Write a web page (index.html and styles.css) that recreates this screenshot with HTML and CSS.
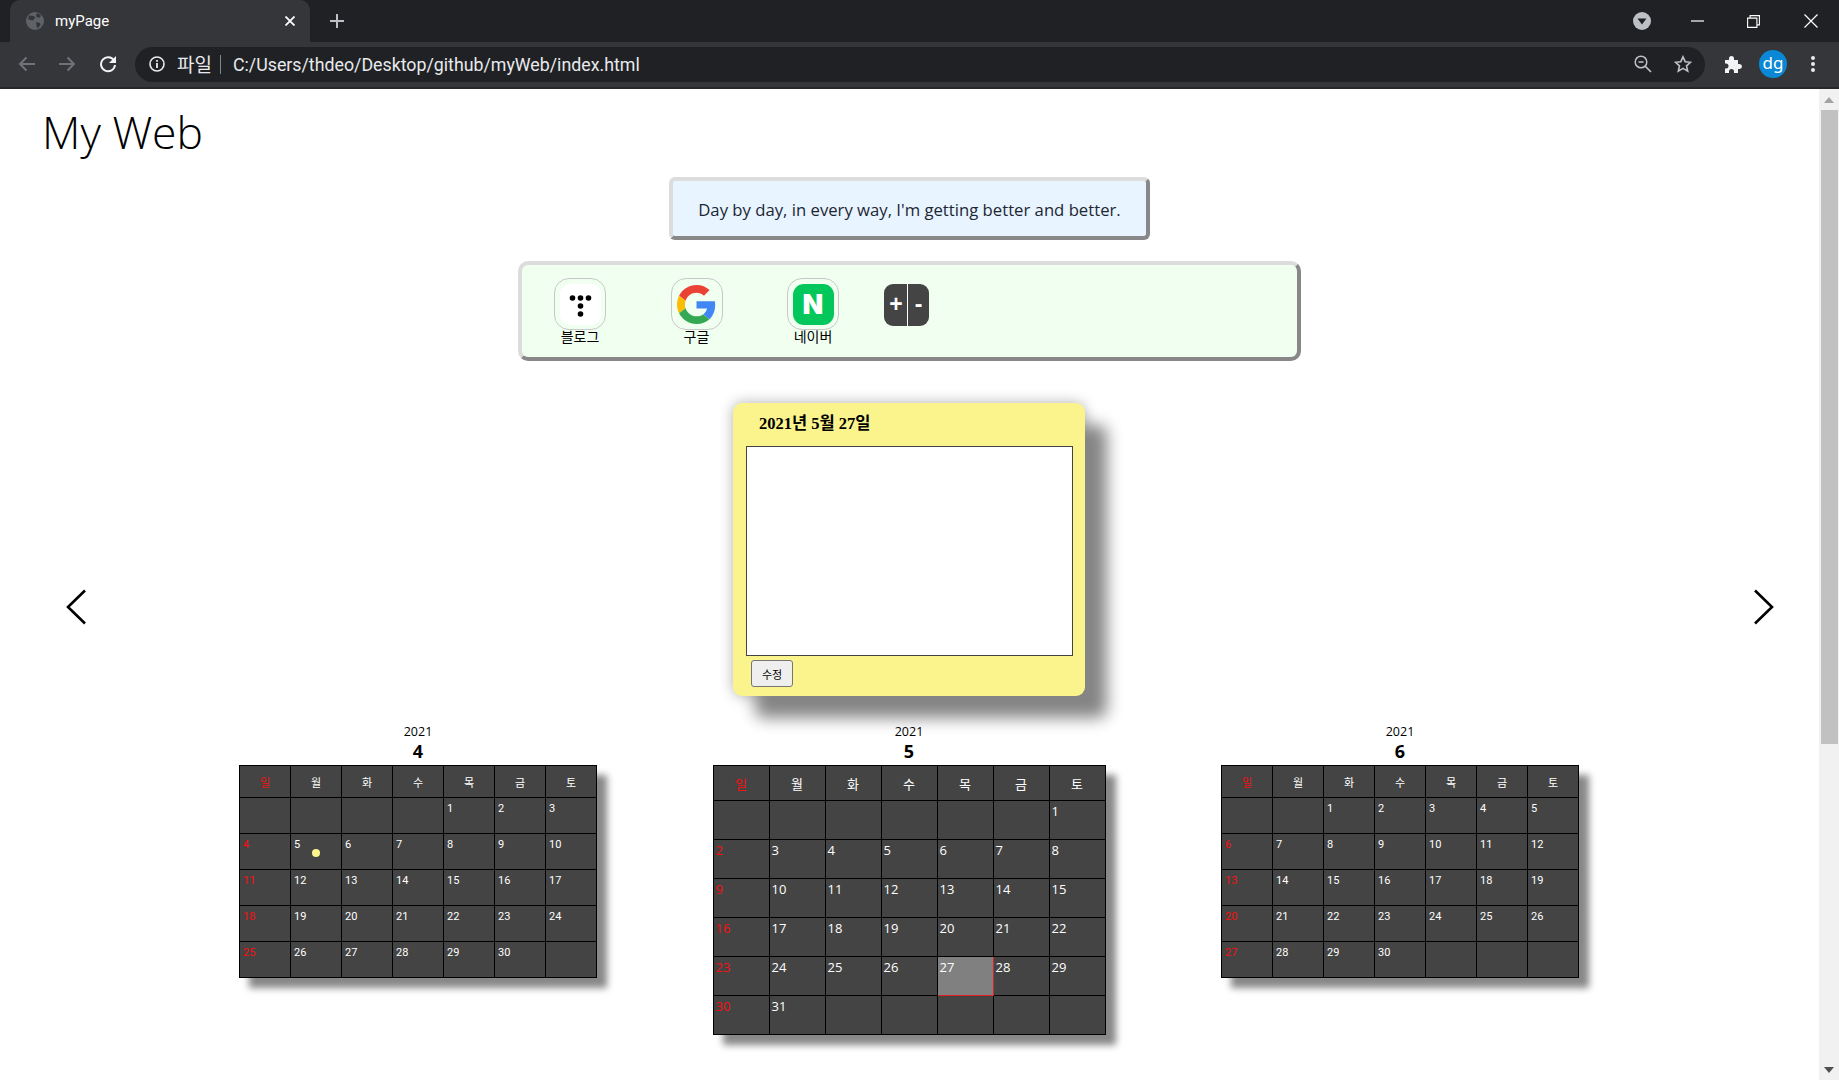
FILE: index.html
```html
<!DOCTYPE html>
<html lang="ko">

<head>
    <meta charset="UTF-8">
    <title>myPage</title>
    <link rel="stylesheet" href="styles.css">
</head>

<body>
    <div class="tabstrip">
        <div class="tab">
            <svg class="favicon" width="18" height="18" viewBox="0 0 18 18">
                <circle cx="9" cy="9" r="9" fill="#5f6368" />
                <path d="M3 3.5 8 4l1 2-2 2.500-3-.5-2-1zM10 10l4 1 .5 2-3 3.500-1-2.500zM11 1l4 2-1 2.500-3 0-1-2z" fill="#35363a" />
            </svg>
            <span class="tabtitle">myPage</span>
            <svg class="tabclose" width="10" height="10" viewBox="0 0 10 10">
                <path d="M.5.5l9 9M9.500.5l-9 9" stroke="#fff" stroke-width="1.800" />
            </svg>
        </div>
        <svg class="newtab" width="14" height="14" viewBox="0 0 14 14">
            <path d="M7 0v14M0 7h14" stroke="#bdc1c6" stroke-width="2" />
        </svg>
        <svg class="tabsearch" width="18" height="18" viewBox="0 0 18 18">
            <circle cx="9" cy="9" r="9" fill="#bdc1c6" />
            <path d="M4.500 6.500h9L9 12.500z" fill="#202124" />
        </svg>
        <svg class="winbtn winmin" width="13" height="2" viewBox="0 0 13 2">
            <path d="M0 1h13" stroke="#fff" stroke-width="1.200" />
        </svg>
        <svg class="winbtn winmax" width="13" height="13" viewBox="0 0 13 13">
            <path d="M.6 3.100h9.300v9.300H.6zM3.100 3V.6h9.300v9.300H10" fill="none" stroke="#fff" stroke-width="1.100" />
        </svg>
        <svg class="winbtn winclose" width="14" height="14" viewBox="0 0 14 14">
            <path d="M.5.5l13 13M13.500.5l-13 13" stroke="#fff" stroke-width="1.200" />
        </svg>
    </div>

    <div class="toolbar">
        <svg class="navicon" width="18" height="16" viewBox="0 0 18 16">
            <path d="M17 8H2M8.500 1.500 2 8l6.500 6.500" fill="none" stroke="#6f7276" stroke-width="2" />
        </svg>
        <svg class="navicon navforward" width="18" height="16" viewBox="0 0 18 16">
            <path d="M1 8h15M9.500 1.500 16 8l-6.500 6.500" fill="none" stroke="#6f7276" stroke-width="2" />
        </svg>
        <svg class="navicon navreload" width="18" height="18" viewBox="0 0 18 18">
            <path d="M15 5.500A7 7 0 1 0 16 10" fill="none" stroke="#f1f3f4" stroke-width="2" />
            <path d="M17 1v7h-7z" fill="#f1f3f4" />
        </svg>
        <div class="omnibox">
            <svg class="infoicon" width="16" height="16" viewBox="0 0 16 16">
                <circle cx="8" cy="8" r="7" fill="none" stroke="#e8eaed" stroke-width="1.600" />
                <path d="M8 7v5M8 4v1.800" stroke="#e8eaed" stroke-width="1.800" />
            </svg>
            <span class="scheme">파일</span>
            <span class="schemebar"></span>
            <span class="url">C:/Users/thdeo/Desktop/github/myWeb/index.html</span>
            <svg class="zoomicon" width="18" height="18" viewBox="0 0 18 18">
                <circle cx="7" cy="7" r="5.800" fill="none" stroke="#bdc1c6" stroke-width="1.500" />
                <path d="M4.500 7h5M11 11l6 6" stroke="#bdc1c6" stroke-width="1.700" />
            </svg>
            <svg class="staricon" width="18" height="18" viewBox="0 0 18 18">
                <path d="M9 1.800l2.200 4.900 5.300.6-4 3.500 1.200 5.300L9 13.400l-4.700 2.700 1.200-5.300-4-3.500 5.300-.6z" fill="none" stroke="#bdc1c6" stroke-width="1.600" />
            </svg>
        </div>
        <svg class="puzzle" width="18" height="18" viewBox="0 0 18 18">
            <path d="M1 5h4V3.500a2.500 2.500 0 0 1 5 0V5h4v4h1.500a2.500 2.500 0 0 1 0 5H14v4h-4v-1.500a2.500 2.500 0 0 0-5 0V18H1v-4.500h1a2.500 2.500 0 0 0 0-5H1z" fill="#f1f3f4" />
        </svg>
        <div class="avatar">dg</div>
        <svg class="dotsmenu" width="4" height="16" viewBox="0 0 4 16">
            <circle cx="2" cy="2" r="2" fill="#e8eaed" />
            <circle cx="2" cy="8" r="2" fill="#e8eaed" />
            <circle cx="2" cy="14" r="2" fill="#e8eaed" />
        </svg>
    </div>

    <div class="viewport">
        <main class="page">
            <h1 class="pagetitle">My Web</h1>

            <div class="quote">Day by day, in every way, I'm getting better and better.</div>

            <div class="links">
                <a class="link">
                    <span class="linkicon">
                        <svg class="tistory" width="41" height="41" viewBox="0 0 41 41">
                            <rect width="41" height="41" rx="10" fill="#fff" />
                            <circle cx="12.500" cy="14" r="2.800" />
                            <circle cx="20.500" cy="14" r="2.800" />
                            <circle cx="28.500" cy="14" r="2.800" />
                            <circle cx="20.500" cy="22" r="2.800" />
                            <circle cx="20.500" cy="30" r="2.800" />
                        </svg>
                    </span>
                    <span class="linklabel">블로그</span>
                </a>
                <a class="link">
                    <span class="linkicon">
                        <svg width="39" height="39" viewBox="0 0 48 48">
                            <path fill="#EA4335" d="M24 9.500c3.540 0 6.710 1.220 9.210 3.600l6.850-6.850C35.900 2.380 30.470 0 24 0 14.620 0 6.510 5.380 2.560 13.220l7.980 6.190C12.430 13.720 17.740 9.500 24 9.500z" />
                            <path fill="#4285F4" d="M46.980 24.550c0-1.570-.15-3.090-.38-4.550H24v9.020h12.940c-.58 2.960-2.260 5.480-4.780 7.180l7.730 6c4.510-4.180 7.090-10.360 7.090-17.650z" />
                            <path fill="#FBBC05" d="M10.530 28.590c-.48-1.450-.76-2.990-.76-4.590s.27-3.140.76-4.590l-7.980-6.190C.92 16.460 0 20.120 0 24c0 3.880.92 7.540 2.560 10.780l7.970-6.190z" />
                            <path fill="#34A853" d="M24 48c6.480 0 11.930-2.130 15.890-5.810l-7.730-6c-2.150 1.450-4.920 2.300-8.160 2.300-6.260 0-11.570-4.220-13.470-9.910l-7.980 6.190C6.510 42.620 14.620 48 24 48z" />
                        </svg>
                    </span>
                    <span class="linklabel">구글</span>
                </a>
                <a class="link">
                    <span class="linkicon">
                        <span class="naver">N</span>
                    </span>
                    <span class="linklabel">네이버</span>
                </a>
                <div class="linkedit">
                    <span class="editbtn">+</span>
                    <span class="editbtn">-</span>
                </div>
            </div>

            <div class="stage">
                <svg class="arrow arrowprev" width="22" height="36" viewBox="0 0 22 36">
                    <path d="M20 1.500 3 18l17 16.500" fill="none" stroke="#000" stroke-width="2.600" />
                </svg>
                <div class="memo">
                    <div class="memodate">2021년 5월 27일</div>
                    <textarea class="memotext"></textarea>
                    <button class="memobtn">수정</button>
                </div>
                <svg class="arrow arrownext" width="22" height="36" viewBox="0 0 22 36">
                    <path d="M2 1.500 19 18 2 34.500" fill="none" stroke="#000" stroke-width="2.600" />
                </svg>
            </div>

            <div class="calendars">
                <section class="cal">
                    <div class="calyear">2021</div>
                    <div class="calmonth">4</div>
                    <table class="caltable small">
                        <tr><th class="sun">일</th><th>월</th><th>화</th><th>수</th><th>목</th><th>금</th><th>토</th></tr>
                        <tr><td></td><td></td><td></td><td></td><td>1</td><td>2</td><td>3</td></tr>
                        <tr><td class="sun">4</td><td>5<span class="memodot"></span></td><td>6</td><td>7</td><td>8</td><td>9</td><td>10</td></tr>
                        <tr><td class="sun">11</td><td>12</td><td>13</td><td>14</td><td>15</td><td>16</td><td>17</td></tr>
                        <tr><td class="sun">18</td><td>19</td><td>20</td><td>21</td><td>22</td><td>23</td><td>24</td></tr>
                        <tr><td class="sun">25</td><td>26</td><td>27</td><td>28</td><td>29</td><td>30</td><td></td></tr>
                    </table>
                </section>
                <section class="cal">
                    <div class="calyear">2021</div>
                    <div class="calmonth">5</div>
                    <table class="caltable big">
                        <tr><th class="sun">일</th><th>월</th><th>화</th><th>수</th><th>목</th><th>금</th><th>토</th></tr>
                        <tr><td></td><td></td><td></td><td></td><td></td><td></td><td>1</td></tr>
                        <tr><td class="sun">2</td><td>3</td><td>4</td><td>5</td><td>6</td><td>7</td><td>8</td></tr>
                        <tr><td class="sun">9</td><td>10</td><td>11</td><td>12</td><td>13</td><td>14</td><td>15</td></tr>
                        <tr><td class="sun">16</td><td>17</td><td>18</td><td>19</td><td>20</td><td>21</td><td>22</td></tr>
                        <tr><td class="sun">23</td><td>24</td><td>25</td><td>26</td><td class="today">27</td><td>28</td><td>29</td></tr>
                        <tr><td class="sun">30</td><td>31</td><td></td><td></td><td></td><td></td><td></td></tr>
                    </table>
                </section>
                <section class="cal">
                    <div class="calyear">2021</div>
                    <div class="calmonth">6</div>
                    <table class="caltable small">
                        <tr><th class="sun">일</th><th>월</th><th>화</th><th>수</th><th>목</th><th>금</th><th>토</th></tr>
                        <tr><td></td><td></td><td>1</td><td>2</td><td>3</td><td>4</td><td>5</td></tr>
                        <tr><td class="sun">6</td><td>7</td><td>8</td><td>9</td><td>10</td><td>11</td><td>12</td></tr>
                        <tr><td class="sun">13</td><td>14</td><td>15</td><td>16</td><td>17</td><td>18</td><td>19</td></tr>
                        <tr><td class="sun">20</td><td>21</td><td>22</td><td>23</td><td>24</td><td>25</td><td>26</td></tr>
                        <tr><td class="sun">27</td><td>28</td><td>29</td><td>30</td><td></td><td></td><td></td></tr>
                    </table>
                </section>
            </div>
        </main>

        <div class="scrollbar">
            <span class="scrollup"></span>
            <span class="scrollthumb"></span>
            <span class="scrolldown"></span>
        </div>
    </div>
</body>

</html>
```

FILE: styles.css
```css
* {
    box-sizing: border-box;
}

body {
    margin: 0;
    height: 1080px;
    overflow: hidden;
    background-color: #fff;
    color: #000;
    font-family: "Open Sans", "Noto Sans CJK KR", sans-serif;
}

/* browser chrome */
.tabstrip {
    display: flex;
    align-items: center;
    height: 42px;
    background-color: #202124;
}

.tab {
    display: flex;
    align-items: center;
    width: 300px;
    height: 42px;
    margin-left: 10px;
    padding: 0 15px 0 16px;
    background-color: #35363a;
    border-radius: 10px 10px 0 0;
}

.favicon {
    flex: none;
}

.tabtitle {
    flex: 1;
    margin-left: 11px;
    color: #fff;
    font-family: Roboto, sans-serif;
    font-size: 15px;
}

.newtab {
    margin-left: 20px;
}

.tabsearch {
    margin-left: 1289px;
}

.winmin {
    margin-left: 40px;
}

.winmax {
    margin-left: 43px;
}

.winclose {
    margin-left: 44px;
}

.toolbar {
    display: flex;
    align-items: center;
    height: 47px;
    padding: 0 0 1px 18px;
    background-color: #35363a;
    border-bottom: 2px solid #26272a;
}

.navforward {
    margin-left: 22px;
}

.navreload {
    margin-left: 23px;
}

.omnibox {
    display: flex;
    align-items: center;
    width: 1570px;
    height: 35px;
    margin-left: 18px;
    padding-left: 14px;
    background-color: #202124;
    border-radius: 18px;
}

.scheme {
    margin-left: 12px;
    color: #e8eaed;
    font-size: 19px;
}

.schemebar {
    width: 1px;
    height: 19px;
    margin: 0 12px 0 8px;
    background-color: #80868b;
}

.url {
    width: 1401px;
    padding-top: 1px;
    color: #e8eaed;
    font-family: Roboto, sans-serif;
    font-size: 17.800px;
}

.staricon {
    margin-left: 22px;
}

.puzzle {
    margin-left: 19px;
}

.avatar {
    width: 28px;
    height: 28px;
    margin-left: 17px;
    border-radius: 50%;
    background-color: #0a88d6;
    color: #fff;
    font-family: "Noto Sans", sans-serif;
    font-size: 17px;
    line-height: 26px;
    text-align: center;
}

.dotsmenu {
    margin-left: 24px;
}

/* page */
.viewport {
    display: flex;
    height: 991px;
}

.page {
    flex: 1;
    min-width: 0;
    overflow: hidden;
}

.pagetitle {
    height: 88px;
    margin: 0;
    padding: 12px 0 0 42px;
    font-size: 44.500px;
    font-weight: 300;
    line-height: 62px;
}

.quote {
    width: 481px;
    height: 63px;
    margin: 0 auto;
    border: 4px solid;
    border-color: #dcdcdc #888 #888 #dcdcdc;
    border-radius: 6px;
    background-color: #e8f4ff;
    color: #1c2733;
    font-size: 16.700px;
    line-height: 57px;
    text-align: center;
}

.links {
    display: flex;
    width: 783px;
    height: 100px;
    margin: 21px auto 0;
    padding: 13px 0 0 32px;
    border: 4px solid;
    border-color: #dcdcdc #888 #888 #dcdcdc;
    border-radius: 10px;
    background-color: #f0fff0;
}

.link {
    display: flex;
    flex-direction: column;
    align-items: center;
    width: 52px;
    margin-right: 64.500px;
}

.linkicon {
    display: flex;
    align-items: center;
    justify-content: center;
    flex: none;
    width: 52px;
    height: 52px;
    border: 1px solid #c8c8c8;
    border-radius: 15px;
}

.linkicon svg {
    display: block;
}

.naver {
    width: 41px;
    height: 41px;
    border-radius: 11px;
    background-color: #03c75a;
    color: #fff;
    font-family: Inter, sans-serif;
    font-size: 27px;
    font-weight: 900;
    line-height: 41px;
    text-align: center;
}

.linklabel {
    font-size: 14px;
    line-height: 14px;
    white-space: nowrap;
}

.linkedit {
    display: flex;
    width: 45px;
    height: 42px;
    margin: 6px 0 0 -20px;
    border-radius: 9px;
    background-color: #444;
    color: #fff;
    font-family: "Liberation Sans", sans-serif;
    font-size: 23px;
    font-weight: 700;
    line-height: 41px;
    text-align: center;
}

.editbtn {
    flex: 1;
}

.editbtn:first-child {
    flex: none;
    width: 24px;
    padding-left: 2px;
    border-right: 1px solid #fff;
}

.editbtn:last-child {
    padding-left: 1px;
}

.stage {
    display: grid;
    grid-template-columns: 1fr 352px 1fr;
    align-items: start;
    margin-top: 42px;
    padding-right: 1px;
}

.arrow {
    margin-top: 186px;
}

.arrowprev {
    margin-left: 65px;
}

.arrownext {
    justify-self: end;
    margin-right: 43px;
}

.memo {
    height: 293px;
    padding: 0 12px 0 13px;
    border-radius: 9px;
    background-color: #fbf48d;
    box-shadow: 22px 22px 16px #858585, 0 0 14px #b0b0b0;
}

.memodate {
    height: 43px;
    padding: 1px 0 0 13px;
    font-family: "Liberation Serif", "Noto Sans CJK KR", serif;
    font-size: 16.500px;
    font-weight: 700;
    line-height: 40px;
}

.memotext {
    display: block;
    width: 327px;
    height: 210px;
    border: 1px solid #444;
    background-color: #fff;
    resize: none;
}

.memobtn {
    display: block;
    width: 42px;
    height: 27px;
    margin: 4px 0 0 5px;
    padding: 0;
    border: 1px solid #767676;
    border-radius: 3px;
    background-color: #efefef;
    color: #000;
    font-family: "Noto Sans CJK KR", sans-serif;
    font-size: 11px;
}

.calendars {
    display: flex;
    justify-content: center;
    gap: 115.500px;
    margin-top: 27px;
    padding-right: 1px;
}

.cal {
    display: flex;
    flex-direction: column;
    align-items: center;
}

.calyear {
    font-size: 12.500px;
    line-height: 17px;
}

.calmonth {
    margin-bottom: 3px;
    font-size: 18px;
    font-weight: 700;
    line-height: 22px;
}

.caltable {
    border-collapse: collapse;
    table-layout: fixed;
    background-color: #444;
    color: #fff;
    box-shadow: 10px 10px 7px #888;
}

.caltable th,
.caltable td {
    border: 1px solid #000;
    overflow: hidden;
}

.caltable th {
    padding: 0;
    font-family: "Noto Sans CJK KR", sans-serif;
    font-weight: 400;
    text-align: center;
}

.caltable td {
    vertical-align: top;
}

.caltable .sun {
    color: #f61010;
}

.small {
    width: 358px;
    font-family: Roboto, sans-serif;
    font-size: 11px;
    font-weight: 400;
}

.small th {
    height: 32px;
    font-size: 11px;
}

.small td {
    height: 36px;
    padding: 4px 0 0 3px;
    line-height: 13px;
}

.big {
    width: 393px;
    font-family: "Open Sans", sans-serif;
    font-size: 13px;
}

.big th {
    height: 35px;
    font-size: 13px;
}

.big td {
    height: 39px;
    padding: 1px 0 0 2px;
    line-height: 18px;
}

.caltable .today {
    background-color: #808080;
    border-right-color: #e02020;
    border-bottom-color: #e02020;
}

.memodot {
    display: block;
    width: 8px;
    height: 8px;
    margin: -2px 0 0 18px;
    border-radius: 50%;
    background-color: #fcf58d;
}

/* scrollbar */
.scrollbar {
    display: flex;
    flex-direction: column;
    align-items: center;
    flex: none;
    width: 20px;
    background-color: #f1f1f1;
}

.scrollup {
    flex: none;
    width: 0;
    height: 0;
    margin: 8px 0 7px;
    border: 5px solid transparent;
    border-top: 0;
    border-bottom: 6px solid #a3a3a3;
}

.scrollthumb {
    flex: none;
    width: 17px;
    height: 634px;
    margin-bottom: 323px;
    background-color: #c1c1c1;
}

.scrolldown {
    flex: none;
    width: 0;
    height: 0;
    border: 5px solid transparent;
    border-bottom: 0;
    border-top: 6px solid #505050;
}
```
